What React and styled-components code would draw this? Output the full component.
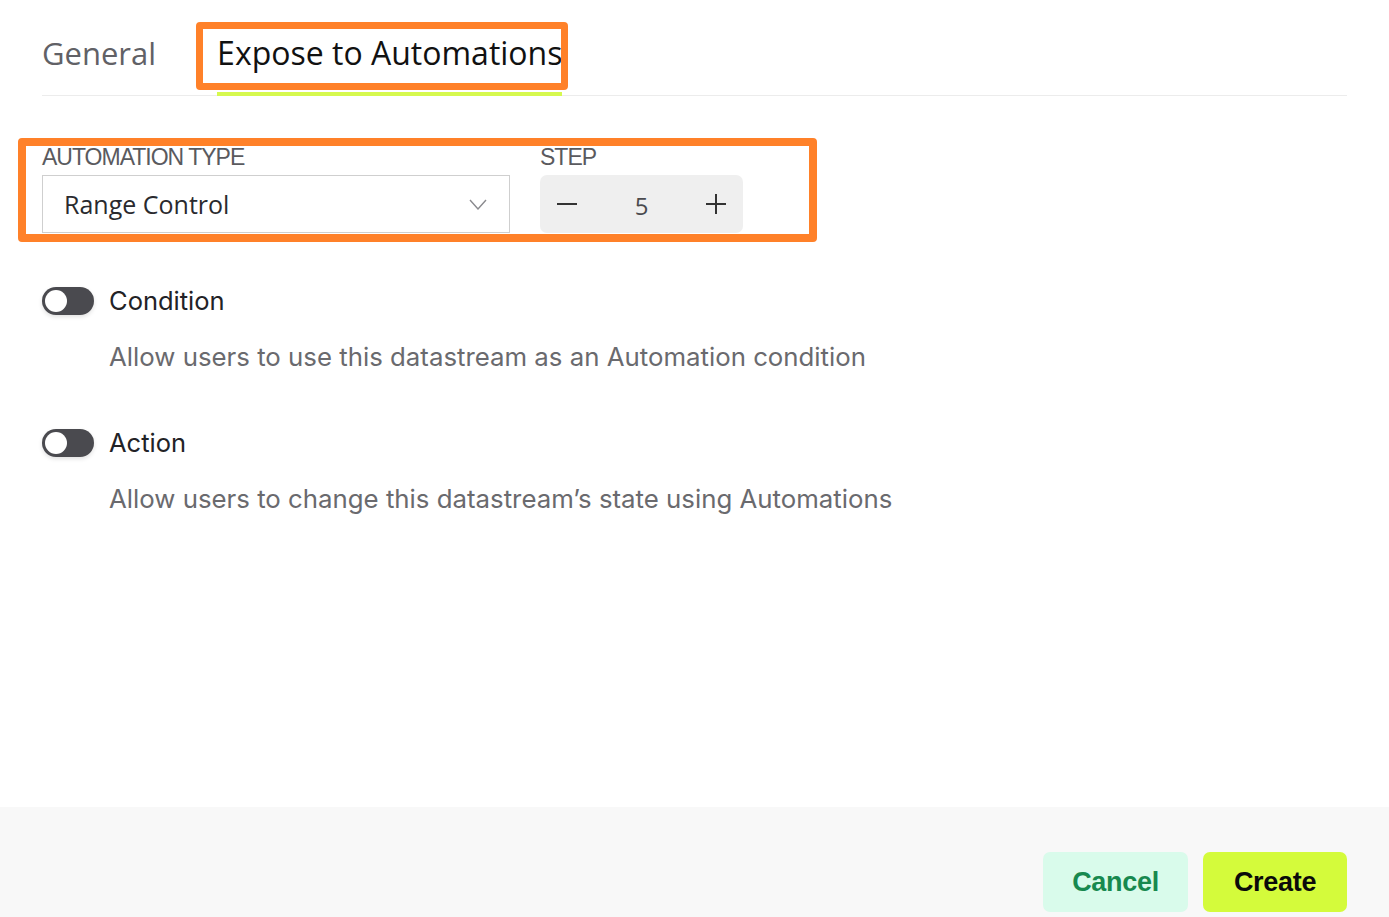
import React from "react";
import styled, { createGlobalStyle } from "styled-components";

const Global = createGlobalStyle`
  html, body { margin: 0; padding: 0; background: #ffffff; }
  body { font-family: "Open Sans", "Liberation Sans", sans-serif; }
  * { box-sizing: border-box; }
`;

const Page = styled.div`
  position: relative;
  width: 1389px;
  height: 917px;
  display: flex;
  flex-direction: column;
  background: #ffffff;
  overflow: hidden;
`;

const Content = styled.div`
  flex: 1;
  padding: 0 42px;
`;

const TabBar = styled.div`
  display: flex;
  align-items: flex-end;
  gap: 61px;
  padding-top: 31px;
  border-bottom: 1px solid #ececec;
`;

const Tab = styled.div`
  font-family: "Open Sans", sans-serif;
  font-size: ${(p) => (p.$active ? 32 : 31)}px;
  line-height: 44px;
  padding-bottom: 17px;
  white-space: nowrap;
  color: ${(p) => (p.$active ? "#111111" : "#616166")};
  border-bottom: 4px solid ${(p) => (p.$active ? "#d6f94f" : "transparent")};
  margin-bottom: -1px;
`;

const FieldRow = styled.div`
  display: flex;
  gap: 30px;
  margin-top: 49px;
`;

const Field = styled.div`
  display: flex;
  flex-direction: column;
  gap: 6px;
  width: ${(p) => p.$w}px;
`;

const Label = styled.div`
  font-family: "Liberation Sans", sans-serif;
  font-size: 23px;
  line-height: 24px;
  color: #5a5a5e;
  letter-spacing: -1px;
  white-space: nowrap;
`;

const Select = styled.div`
  height: 58px;
  border: 1px solid #cfcfcf;
  display: flex;
  align-items: center;
  justify-content: space-between;
  padding: 0 22px 0 21px;
  font-family: "Open Sans", sans-serif;
  font-size: 25px;
  color: #2a2a2e;
`;

const Stepper = styled.div`
  height: 58px;
  width: 203px;
  background: #efefef;
  border-radius: 7px;
  display: flex;
  align-items: center;
  justify-content: space-between;
  padding: 0 17px;
  font-family: "Open Sans", sans-serif;
  font-size: 24px;
  color: #4a4a4e;
`;

const StepValue = styled.span`
  padding-top: 2px;
`;

const ToggleBlock = styled.div`
  margin-top: ${(p) => p.$mt}px;
`;

const ToggleRow = styled.div`
  display: flex;
  align-items: center;
  gap: 15px;
`;

const Switch = styled.div`
  width: 52px;
  height: 28px;
  border-radius: 14px;
  background: #4a4a4f;
  padding: 3px;
  display: flex;
  align-items: center;
  box-shadow: 0 2px 4px rgba(0, 0, 0, 0.12);
`;

const Knob = styled.div`
  width: 22px;
  height: 22px;
  border-radius: 50%;
  background: #ffffff;
`;

const ToggleTitle = styled.div`
  font-family: Inter, sans-serif;
  font-size: 25.5px;
  line-height: 32px;
  color: #222226;
`;

const Description = styled.div`
  margin-top: 24px;
  padding-left: 67px;
  font-family: Inter, sans-serif;
  font-size: 25.8px;
  line-height: 32px;
  color: #6a6a6e;
`;

const Footer = styled.div`
  height: 110px;
  background: #f8f8f8;
  display: flex;
  justify-content: flex-end;
  align-items: flex-end;
  gap: 15px;
  padding: 0 42px 5px 0;
`;

const Button = styled.button`
  width: ${(p) => p.$w}px;
  height: 60px;
  border: none;
  border-radius: 7px;
  font-family: "Liberation Sans", Arial, sans-serif;
  font-weight: 700;
  font-size: 27px;
  letter-spacing: -0.3px;
  cursor: pointer;
  background: ${(p) => (p.$primary ? "#d4fb3b" : "#d9fbeb")};
  color: ${(p) => (p.$primary ? "#0a0a0a" : "#17894f")};
`;

const Highlight = styled.div`
  position: absolute;
  left: ${(p) => p.$x}px;
  top: ${(p) => p.$y}px;
  width: ${(p) => p.$w}px;
  height: ${(p) => p.$h}px;
  border: ${(p) => p.$stroke}px solid #ff8129;
  border-radius: 4px;
  pointer-events: none;
`;

const Chevron = () => (
  <svg width="18" height="11" viewBox="0 0 18 11" fill="none">
    <path d="M1 1 L9 10 L17 1" stroke="#8a8a8e" strokeWidth="1.4" />
  </svg>
);

const Minus = () => (
  <svg width="20" height="20" viewBox="0 0 20 20">
    <path d="M0 10 H20" stroke="#333" strokeWidth="2" />
  </svg>
);

const Plus = () => (
  <svg width="20" height="20" viewBox="0 0 20 20">
    <path d="M0 10 H20 M10 0 V20" stroke="#333" strokeWidth="2" />
  </svg>
);

const ToggleOption = ({ title, desc, mt }) => (
  <ToggleBlock $mt={mt}>
    <ToggleRow>
      <Switch>
        <Knob />
      </Switch>
      <ToggleTitle>{title}</ToggleTitle>
    </ToggleRow>
    <Description>{desc}</Description>
  </ToggleBlock>
);

export default function App() {
  return (
    <>
      <Global />
      <Page>
        <Content>
          <TabBar>
            <Tab>General</Tab>
            <Tab $active>Expose to Automations</Tab>
          </TabBar>
          <FieldRow>
            <Field $w={468}>
              <Label>AUTOMATION TYPE</Label>
              <Select>
                <span>Range Control</span>
                <Chevron />
              </Select>
            </Field>
            <Field $w={203}>
              <Label>STEP</Label>
              <Stepper>
                <Minus />
                <StepValue>5</StepValue>
                <Plus />
              </Stepper>
            </Field>
          </FieldRow>
          <ToggleOption
            mt={52}
            title="Condition"
            desc="Allow users to use this datastream as an Automation condition"
          />
          <ToggleOption
            mt={54}
            title="Action"
            desc="Allow users to change this datastream’s state using Automations"
          />
        </Content>
        <Footer>
          <Button $w={145}>Cancel</Button>
          <Button $w={144} $primary>Create</Button>
        </Footer>
        <Highlight $stroke={7} $x={196} $y={22} $w={372} $h={68} />
        <Highlight $stroke={8} $x={18} $y={138} $w={799} $h={104} />
      </Page>
    </>
  );
}
